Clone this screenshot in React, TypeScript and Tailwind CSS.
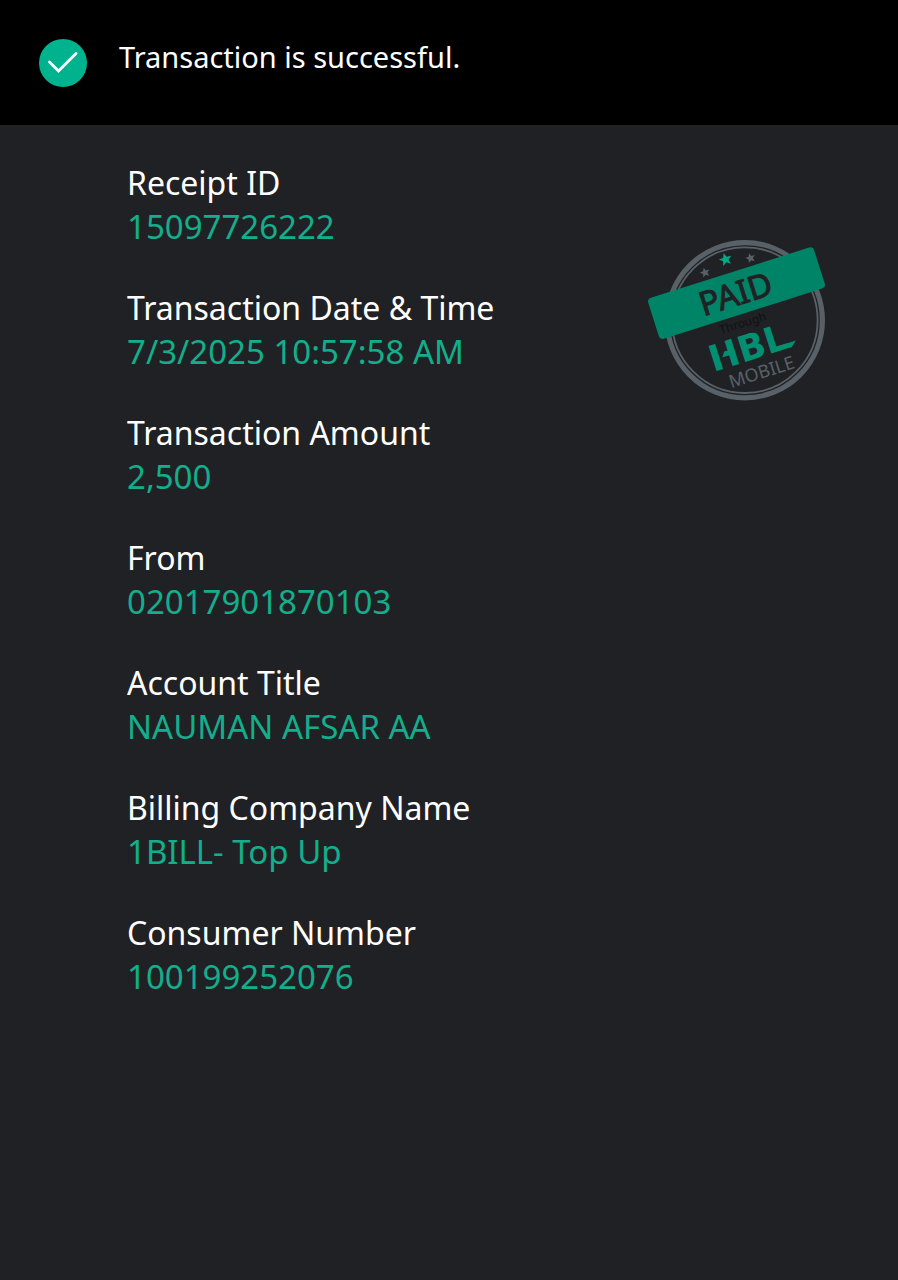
const fields = [
  { label: "Receipt ID", value: "15097726222" },
  { label: "Transaction Date & Time", value: "7/3/2025 10:57:58 AM" },
  { label: "Transaction Amount", value: "2,500" },
  { label: "From", value: "02017901870103" },
  { label: "Account Title", value: "NAUMAN AFSAR AA" },
  { label: "Billing Company Name", value: "1BILL- Top Up" },
  { label: "Consumer Number", value: "100199252076" },
];

const STAR = "M0 -5 L1.4 -1.7 L5 -1.5 L2.2 .8 L3.1 4.3 L0 2.3 L-3.1 4.3 L-2.2 .8 L-5 -1.5 L-1.4 -1.7 Z";

function CheckBadge() {
  return (
    <svg viewBox="0 0 48 48" className="size-12 shrink-0" aria-hidden="true">
      <circle cx="24" cy="24" r="24" fill="#00b38f" />
      <path d="M10.5 23 L19.5 32 L37 14.5" fill="none" stroke="#fff" strokeWidth="2.8" strokeLinecap="round" />
    </svg>
  );
}

function PaidStamp() {
  return (
    <svg viewBox="0 0 200 180" className="h-[180px] w-[200px] shrink-0" role="img" aria-label="Paid through HBL Mobile">
      <circle cx="104.8" cy="90.2" r="77.6" fill="none" stroke="#596168" strokeWidth="5.2" />
      <circle cx="104.8" cy="90.2" r="72.8" fill="none" stroke="#596168" strokeWidth="1.8" />
      <g fill="#596168">
        <path d={STAR} transform="translate(65 42.5) rotate(-17)" />
        <path d={STAR} transform="translate(110.5 28) rotate(-17)" />
      </g>
      <path d={STAR} transform="translate(85.5 29.5) rotate(-17) scale(1.3)" fill="#00a884" />
      <g transform="translate(96.5 63.2) rotate(-17.6)">
        <rect x="-87" y="-21.5" width="174" height="43" rx="4" fill="#008468" />
      </g>
      <g fontFamily="'Noto Sans', sans-serif" textAnchor="middle">
        <text transform="translate(99 75) rotate(-17.6)" fontSize="33" fill="#202124" stroke="#202124" strokeWidth="1">
          PAID
        </text>
        <text transform="translate(104 97) rotate(-17.6)" fontSize="12" fill="#101113">Through</text>
        <text transform="translate(123.5 148) rotate(-17.6)" fontSize="18" fill="#596168">MOBILE</text>
      </g>
      <g transform="translate(73.5 142) rotate(-17.6)">
        <text fontFamily="'DejaVu Sans', sans-serif" fontWeight="700" fontSize="36" fill="#008f70">HBL</text>
        <path d="M10.1 -9 L11.5 -9 L17 -17.5 L10.1 -17.5 Z" fill="#202124" />
        <path d="M79 -5.1 L88 -5.1 L82 0 L79 0 Z" fill="#008f70" />
      </g>
    </svg>
  );
}

export default function App() {
  return (
    <div className="flex min-h-screen flex-col bg-[#202124] font-['Noto_Sans',sans-serif] text-white">
      <header className="flex items-start gap-8 bg-black px-[39px] pt-[39px] pb-[38px]">
        <CheckBadge />
        <h1 className="text-[29px] leading-9">Transaction is successful.</h1>
      </header>
      <main className="flex items-start justify-between pt-9 pr-[58px] pl-[127px]">
        <dl className="flex flex-col gap-[37px] leading-[44px]">
          {fields.map((field) => (
            <div key={field.label}>
              <dt className="text-[32px]">{field.label}</dt>
              <dd className="text-[33px] text-[#13ae8c]">{field.value}</dd>
            </div>
          ))}
        </dl>
        <div className="pt-[69px]">
          <PaidStamp />
        </div>
      </main>
    </div>
  );
}
